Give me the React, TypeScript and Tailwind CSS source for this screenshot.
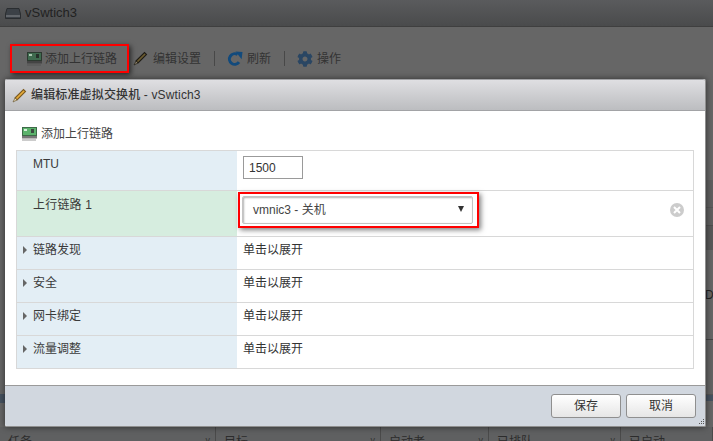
import React from "react";
import { FaCog } from "react-icons/fa";

const font = { fontFamily: '"Liberation Sans","Noto Sans CJK SC",sans-serif' };

function Nic({ dim = false }: { dim?: boolean }) {
  return (
    <svg width="15" height="14" viewBox="0 0 15 14" className="shrink-0">
      <rect x="0.5" y="0.5" width="14" height="8" fill={dim ? "#3f6b4f" : "#5cb36c"} stroke={dim ? "#2c3a30" : "#3d6a48"} />
      <rect x="2" y="2" width="3" height="2" fill={dim ? "#a8c4ae" : "#d8eedc"} />
      <rect x="9" y="2" width="3" height="4" fill={dim ? "#26302a" : "#3b4a40"} />
      <rect x="0" y="9" width="15" height="2.5" fill={dim ? "#444" : "#777"} />
      <path d="M1 12v2M3 12v2M5 12v2M7 12v2M9 12v2M11 12v2M13 12v2" stroke={dim ? "#555" : "#999"} strokeWidth="1" />
    </svg>
  );
}

function Pencil({ dim = false }: { dim?: boolean }) {
  return (
    <svg width="15" height="15" viewBox="0 0 15 15" className="shrink-0">
      <path d="M3 10 L11.5 1.5 L13.5 3.5 L5 12 Z" fill={dim ? "#6d5c30" : "#e9ad3a"} stroke={dim ? "#1f1c16" : "#7a5a22"} strokeWidth="1.1" />
      <path d="M3 10 L5 12 L1 14 Z" fill={dim ? "#8f826a" : "#eed9ac"} stroke={dim ? "#1f1c16" : "#6a5a3a"} strokeWidth="0.7" />
    </svg>
  );
}

function Refresh() {
  return (
    <svg width="16" height="16" viewBox="0 0 16 16" className="shrink-0">
      <path d="M12 11.2 A5.3 5.3 0 1 1 10.6 3.6" fill="none" stroke="#124a7c" strokeWidth="3" />
      <path d="M8.5 0.5 L15.5 1 L14.6 8.2 Z" fill="#124a7c" />
    </svg>
  );
}

function Divider() {
  return <div className="h-[15px] w-px bg-[#484848]" />;
}

function Row({
  label,
  h,
  arrow = true,
  green = false,
  children,
}: {
  label: string;
  h: string;
  arrow?: boolean;
  green?: boolean;
  children?: React.ReactNode;
}) {
  return (
    <div className={`flex border-b border-[#d8d8d8] ${h}`}>
      <div
        className={`flex w-[220px] shrink-0 items-start pl-[6px] text-[12px] text-[#3a3a3a] ${green ? "bg-[#d6eddf] pt-[5px]" : "bg-[#e3eef5] pt-[4px]"}`}
      >
        <span className="flex h-[18px] w-[10px] items-center justify-start">
          {arrow && <span className="h-0 w-0 border-y-[4px] border-l-[4px] border-y-transparent border-l-[#666]" />}
        </span>
        <span className={green ? "tracking-[0.2px]" : ""}>{label}</span>
      </div>
      {children}
    </div>
  );
}

function Expand() {
  return <div className="pl-[6px] pt-[4px] text-[12px] text-[#333]">单击以展开</div>;
}

const bottomCols = [
  { t: "任务", w: "w-[216px]" },
  { t: "目标", w: "w-[165px]" },
  { t: "启动者", w: "w-[108px]" },
  { t: "已排队", w: "w-[132px]" },
  { t: "已启动", w: "flex-1" },
];

export default function App() {
  return (
    <div style={font} className="relative h-[441px] w-[713px] overflow-hidden bg-[#666666]">
      <div className="flex h-full flex-col">
        <div className="flex h-[27px] shrink-0 items-center gap-[4px] border-b border-[#3f3f3f] bg-gradient-to-b from-[#5a5b5d] to-[#4a4b4c] pl-[5px]">
          <svg width="16" height="11" viewBox="0 0 16 11">
            <path d="M2 0.5H14L15.5 6V10.5H0.5V6Z" fill="#3c4147" stroke="#2a2d30" />
            <rect x="1" y="7" width="14" height="2" fill="#62666b" />
          </svg>
          <span className="text-[13px] text-[#222]">vSwtich3</span>
        </div>

        <div className="flex h-[52px] shrink-0 items-start pl-[10px] pt-[17px] text-[12px] text-[#333]">
          <div className="flex h-[29px] w-[119px] items-center gap-[3px] border-2 border-[#ff0000] pl-[15px] shadow-[2px_2px_5px_rgba(0,0,0,0.6)]">
            <Nic dim />
            <span>添加上行链路</span>
          </div>
          <div className="ml-[4px] flex h-[29px] items-center gap-[5px]">
            <Pencil dim />
            <span>编辑设置</span>
            <div className="ml-[8px] mr-[7px]"><Divider /></div>
            <Refresh />
            <span className="ml-[-1px]">刷新</span>
            <div className="ml-[8px] mr-[7px]"><Divider /></div>
            <FaCog className="h-[16px] w-[16px] text-[#2a4663]" />
            <span className="ml-[-1px]">操作</span>
          </div>
        </div>

        <div className="flex flex-1 justify-between">
          <div className="w-[5px] pt-[315px]">
            <div className="h-[9px] bg-[#465260]" />
          </div>
          <div className="flex w-[8px] flex-col pt-[101px]">
            <div className="h-[28px] border-b border-[#555] bg-[#5f5f5f]" />
            <div className="h-[18px] border-b border-[#4e4e4e] bg-[#5f5f5f]" />
            <div className="h-[24px] bg-[#585858]" />
            <div className="flex h-[90px] items-center border-b border-[#444] bg-[#666] text-[12px] text-[#222]">Do</div>
            <div className="h-[55px] border-b border-[#555] bg-[#636363]" />
            <div className="h-[6px] bg-[#465260]" />
          </div>
        </div>

        <div className="flex h-[14px] shrink-0 overflow-hidden bg-[#5f6061] text-[12px] text-[#2c2c2c]">
          {bottomCols.map((c, i) => (
            <div key={c.t} className={`flex items-start justify-between border-r border-[#4a4a4a] pl-[8px] pr-[5px] pt-[6px] ${c.w}`}>
              <span>{c.t}</span>
              {i < 4 && <span className="pt-[3px] text-[9px] leading-none text-[#333]">v</span>}
            </div>
          ))}
        </div>
      </div>

      <div className="absolute left-[5px] top-[79px] flex h-[348px] w-[701px] flex-col rounded-[2px] border-r border-b border-[#8f8f8f] bg-white shadow-[0_0_6px_rgba(0,0,0,0.55)]">
        <div className="flex h-[32px] shrink-0 items-center gap-[4px] rounded-t-[2px] border-y border-[#a2a3a6] bg-gradient-to-b from-[#dfdfe2] to-[#bcbdc0] pl-[7px]">
          <Pencil />
          <span className="text-[12px] font-medium tracking-[0.15px] text-[#333]">编辑标准虚拟交换机 - vSwtich3</span>
        </div>

        <div className="flex flex-1 flex-col px-[11px] pt-[15px]">
          <div className="flex h-[16px] items-center gap-[4px] pl-[6px] text-[12px] text-[#444]">
            <Nic />
            <span>添加上行链路</span>
          </div>
          <div className="mt-[8px] w-[678px] border-x border-t border-[#d8d8d8]">
            <Row label="MTU" h="h-[40px]" arrow={false}>
              <div className="pl-[6px] pt-[5px]">
                <div className="flex h-[23px] w-[60px] items-center border border-[#9a9a9a] pl-[5px] text-[12px] leading-[18px] text-[#333]">1500</div>
              </div>
            </Row>
            <Row label="上行链路 1" h="h-[46px]" arrow={false} green>
              <div className="relative flex flex-1 items-start pl-[1px] pt-[1px]">
                <div className="h-[36px] w-[241px] border-2 border-[#ff0000] p-[2px] shadow-[2px_2px_5px_rgba(0,0,0,0.5)]">
                  <div className="flex h-[28px] w-[231px] items-center justify-between rounded-[2px] border border-[#c4c4c4] pl-[10px] pr-[8px] text-[12px] text-[#444] shadow-[inset_1px_1px_2px_rgba(0,0,0,0.3)]">
                    <span>vmnic3 - 关机</span>
                    <span className="mb-[3px] h-0 w-0 border-x-[3px] border-t-[6px] border-x-transparent border-t-[#333]" />
                  </div>
                </div>
                <div className="absolute left-[433px] top-[12px] flex h-[14px] w-[14px] items-center justify-center rounded-full bg-[#cccccc]">
                  <svg width="8" height="8" viewBox="0 0 8 8">
                    <path d="M1 1L7 7M7 1L1 7" stroke="#fff" strokeWidth="2" />
                  </svg>
                </div>
              </div>
            </Row>
            <Row label="链路发现" h="h-[33px]"><Expand /></Row>
            <Row label="安全" h="h-[33px]"><Expand /></Row>
            <Row label="网卡绑定" h="h-[33px]"><Expand /></Row>
            <Row label="流量调整" h="h-[33px]"><Expand /></Row>
          </div>
        </div>

        <div className="relative flex h-[41px] shrink-0 items-start justify-end gap-[5px] rounded-b-[2px] border-t border-[#9a9a9a] bg-[#d1d7df] pr-[9px] pt-[8px]">
          <button className="h-[24px] w-[70px] rounded-[3px] border border-[#8f8f8f] bg-gradient-to-b from-[#ffffff] to-[#e6e6e6] text-[12px] text-[#333]">保存</button>
          <button className="h-[24px] w-[70px] rounded-[3px] border border-[#8f8f8f] bg-gradient-to-b from-[#ffffff] to-[#e6e6e6] text-[12px] text-[#333]">取消</button>
          <svg width="6" height="6" viewBox="0 0 6 6" className="absolute bottom-[1px] right-[1px]">
            <path d="M5 0h1v1H5zM3 2h1v1H3zM5 2h1v1H5zM1 4h1v1H1zM3 4h1v1H3zM5 4h1v1H5z" fill="#555" />
          </svg>
        </div>
      </div>
    </div>
  );
}
